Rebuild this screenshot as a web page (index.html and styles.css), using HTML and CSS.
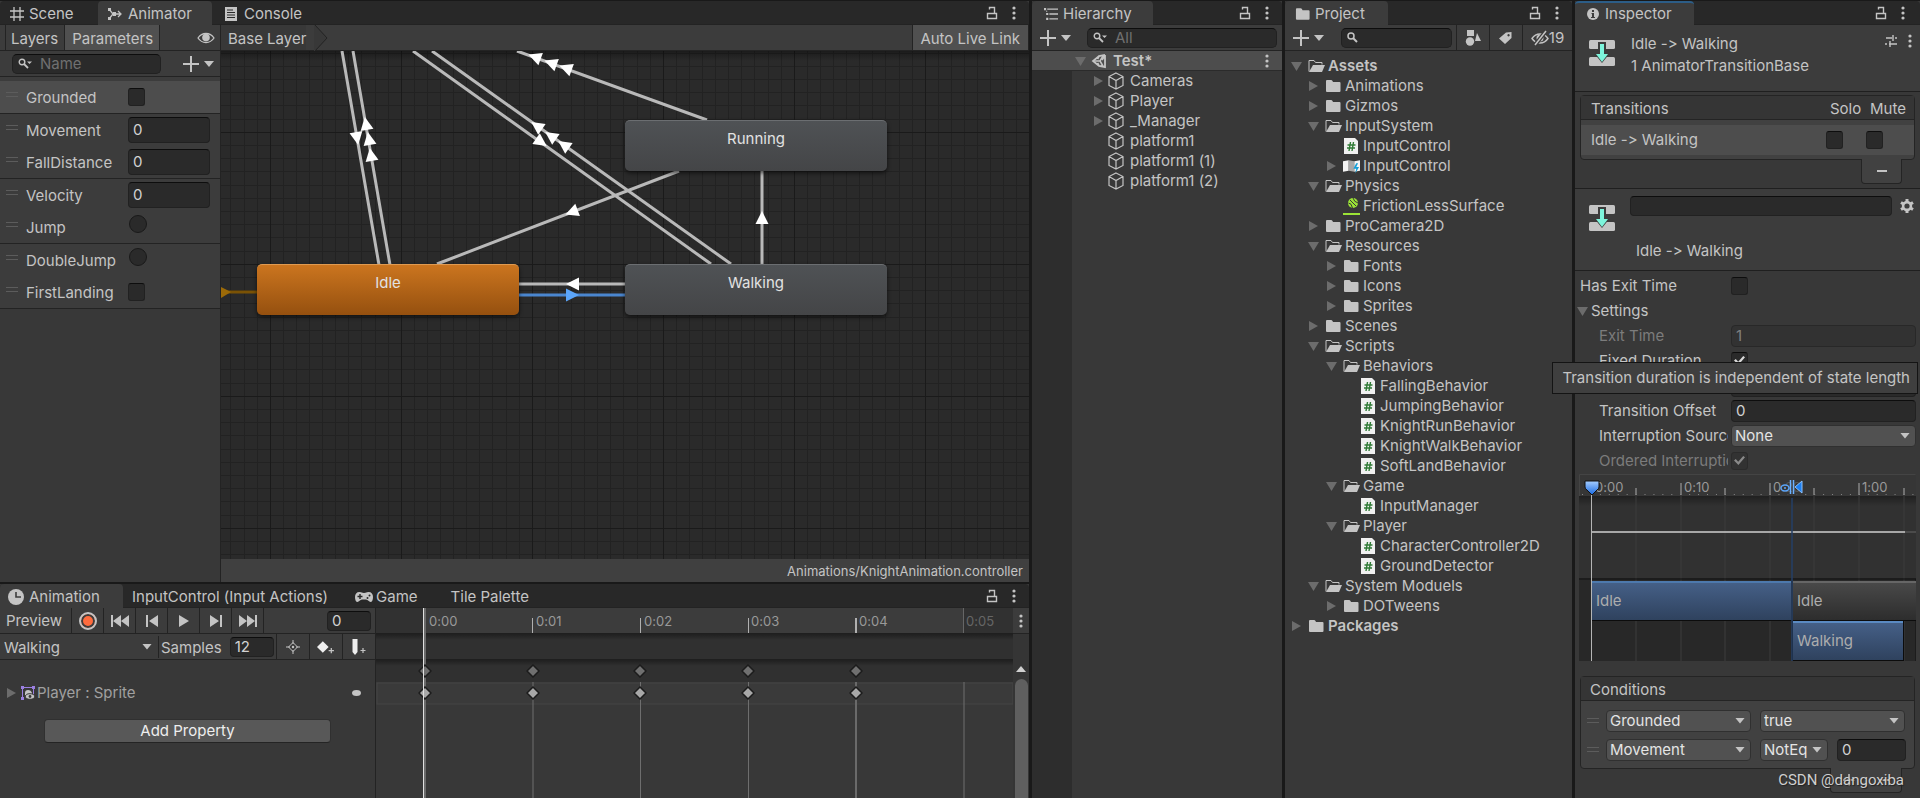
FILE: index.html
```html
<!DOCTYPE html>
<html lang="en">
  <head>
    <meta charset="UTF-8" />
    <meta name="viewport" content="width=device-width, initial-scale=1.0" />
    <title>Animator</title>
    <link rel="stylesheet" href="styles.css">
  </head>
  <body>
    <svg class="sprite" aria-hidden="true">
      <symbol id="lock" viewBox="0 0 12 14">
        <path d="M1.500 7.500h9v5h-9zM3.500 3.500V1.500h5v6" fill="none" stroke="currentColor" stroke-width="1.400" />
      </symbol>
      <symbol id="dots" viewBox="0 0 4 14">
        <circle cx="2" cy="2" r="1.600" /><circle cx="2" cy="7" r="1.600" /><circle cx="2" cy="12" r="1.600" />
      </symbol>
      <symbol id="plus" viewBox="0 0 16 16">
        <path d="M7 0h2v7h7v2H9v7H7V9H0V7h7z" />
      </symbol>
      <symbol id="down" viewBox="0 0 10 6"><path d="M0 0h10L5 6z" /></symbol>
      <symbol id="open" viewBox="0 0 12 12"><path d="M1 2h11L6.500 11z" /></symbol>
      <symbol id="closed" viewBox="0 0 12 12"><path d="M2 1v10l9-5z" /></symbol>
      <symbol id="search" viewBox="0 0 12 12">
        <circle cx="4" cy="4" r="3" fill="none" stroke="currentColor" stroke-width="1.500" />
        <path d="M6 6l4 4" stroke="currentColor" stroke-width="2" />
      </symbol>
      <symbol id="search-menu" viewBox="0 0 14 12">
        <circle cx="4" cy="4" r="2.800" fill="none" stroke="currentColor" stroke-width="1.400" />
        <path d="M6 6l4 4" stroke="currentColor" stroke-width="1.800" />
        <path d="M9 3.500h5L11.500 6z" />
      </symbol>
      <symbol id="grid" viewBox="0 0 14 14">
        <path d="M4 0v14M10 0v14M0 4h14M0 10h14" stroke="currentColor" stroke-width="1.300" />
      </symbol>
      <symbol id="animator" viewBox="0 0 14 12">
        <path d="M1 1l4 5-4 5M4 6h9M10 3l3 3-3 3" fill="none" stroke="currentColor" stroke-width="1.300" />
        <path d="M0 0h3v3H0zM0 9h3v3H0zM5 4h3v4H5z" />
      </symbol>
      <symbol id="console" viewBox="0 0 12 14">
        <path d="M0 0h12v14H0z" />
        <path d="M2 3h6M2 5.500h8M2 8h8M2 10.500h8" stroke="#282828" stroke-width="1.200" />
      </symbol>
      <symbol id="clock" viewBox="0 0 16 16">
        <circle cx="8" cy="8" r="8" />
        <path d="M8 3v5h5" fill="none" stroke="#3c3c3c" stroke-width="1.600" />
      </symbol>
      <symbol id="gamepad" viewBox="0 0 18 10">
        <path d="M4.500 0C7 0 6.500 1 9 1s2-1 4.500-1C16.500 0 18 2 18 5s-1 5-2.500 5S13 7.500 11 7.500H7C5 7.500 4 10 2.500 10S0 8 0 5s1.500-5 4.500-5z" />
        <path d="M2.500 4.500h5M5 2v5" stroke="#282828" stroke-width="1.400" />
        <circle cx="12.500" cy="6" r="1" fill="#282828" /><circle cx="14.500" cy="3.500" r="1" fill="#282828" />
      </symbol>
      <symbol id="eye" viewBox="0 0 18 12">
        <path d="M1 6c4-6 12-6 16 0-4 6-12 6-16 0z" fill="none" stroke="currentColor" stroke-width="1.300" />
        <circle cx="9" cy="5.500" r="3.800" />
      </symbol>
      <symbol id="hidden" viewBox="0 0 18 14">
        <path d="M1 7.500c4-6 12-6 16 0-4 6-12 6-16 0z" fill="none" stroke="currentColor" stroke-width="1.400" />
        <circle cx="9" cy="7" r="3.500" />
        <path d="M15 0L4 14" stroke="#3c3c3c" stroke-width="4" />
        <path d="M15 0L4 14" stroke="currentColor" stroke-width="1.500" />
      </symbol>
      <symbol id="hierarchy" viewBox="0 0 13 12">
        <path d="M3 1.500h10M5 6h8M5 10.500h8" stroke="currentColor" stroke-width="1.200" />
        <path d="M0 .5h2v2H0zM2 5h2v2H2zM2 9.500h2v2H2zM2 3h1v1H2z" />
      </symbol>
      <symbol id="info" viewBox="0 0 12 12">
        <circle cx="6" cy="6" r="6" />
        <path d="M5 2h2v2H5zM4.500 5H7v4h1v1H4V9h1V6h-.5z" fill="#3c3c3c" />
      </symbol>
      <symbol id="folder" viewBox="0 0 17 14">
        <path d="M1 2q0-1 1-1h4q1 0 1.500 1l.5 1h6.500q1 0 1 1v8q0 1-1 1H2q-1 0-1-1z" />
      </symbol>
      <symbol id="folder-open" viewBox="0 0 17 14">
        <path d="M1 12.500V1.500h5l1.500 2H14v2" fill="none" stroke="currentColor" />
        <path d="M5 6h12l-3 7H1z" />
      </symbol>
      <symbol id="cube" viewBox="0 0 18 18">
        <path d="M9 1l7 3.500v9L9 17l-7-3.500v-9zM2 4.500l7 4 7-4M9 8.500V17" fill="none" stroke="currentColor" stroke-width="1.200" />
      </symbol>
      <symbol id="unity" viewBox="0 0 16 16">
        <path d="M14 2v12L9.500 12.500M14 2L8 3 2 8l6 5 6 1M8 3l-1.500 3M8 13l-1.500-3M14 2l-3 5" fill="none" stroke="currentColor" stroke-width="1.800" />
        <path d="M2 8h7l3-5M9 8l3 5" fill="none" stroke="currentColor" stroke-width="1.500" />
      </symbol>
      <symbol id="script" viewBox="0 0 17 18">
        <path d="M1 1h11l3 3v13H1z" fill="#f0f0f0" />
        <path d="M7.500 5l-1.500 9M10.500 5L9 14M4.500 8h8M4 11h8" stroke="#2f7a35" stroke-width="1.400" />
      </symbol>
      <symbol id="actions" viewBox="0 0 18 16">
        <path d="M0 3l6-1v11l-6 1z" fill="#f4f4f4" />
        <path d="M6 2l6 1v11l-6-1z" fill="#a8a8a8" />
        <path d="M12 3l6-1v11l-6 1z" fill="#f4f4f4" />
        <path d="M14 5l-3 6h3l-1 5 4-7h-3l2-4z" fill="#159fd8" />
      </symbol>
      <symbol id="friction" viewBox="0 0 17 18">
        <circle cx="10" cy="6" r="5" fill="#9be336" />
        <path d="M5.500 6q3 0 4 5M10 1q1 4 5 5M7 3l6 6" fill="none" stroke="#383838" />
        <path d="M0 16h17v2H0z" fill="#9be336" />
      </symbol>
      <symbol id="shapes" viewBox="0 0 16 16">
        <path d="M2 0h7v6H2zM12 3l4 8h-6z" /><circle cx="5" cy="11.500" r="4.200" />
      </symbol>
      <symbol id="tag" viewBox="0 0 14 14">
        <path d="M7 1.500L12.500 1v6L6 13 0 7.500zM9.500 3a1.200 1.200 0 1 0 .1 0z" fill-rule="evenodd" />
      </symbol>
      <symbol id="first" viewBox="0 0 18 12"><path d="M0 0h2v12H0zM10 0v12L2 6zM18 0v12l-8-6z" /></symbol>
      <symbol id="prev" viewBox="0 0 12 12"><path d="M0 0h2v12H0zM12 0v12L3 6z" /></symbol>
      <symbol id="play" viewBox="0 0 10 12"><path d="M0 0v12l10-6z" /></symbol>
      <symbol id="target" viewBox="0 0 14 14">
        <path d="M7 2.500L11.500 7 7 11.500 2.500 7zM7 0v4M7 10v4M0 7h4M10 7h4" fill="none" stroke="currentColor" />
        <circle cx="7" cy="7" r="1.200" />
      </symbol>
      <symbol id="add-key" viewBox="0 0 17 14">
        <path d="M5.500 1.500L11 7l-5.500 5.500L0 7z" fill="#eee" />
        <path d="M13.500 8v5M11 10.500h5" stroke="currentColor" stroke-width="1.200" />
      </symbol>
      <symbol id="add-event" viewBox="0 0 15 16">
        <path d="M1 0h5v13l-2.500 3L1 13z" fill="#eee" />
        <path d="M11.500 9v5M9 11.500h5" stroke="currentColor" stroke-width="1.200" />
      </symbol>
      <symbol id="sprite-curve" viewBox="0 0 14 14">
        <path d="M1.500 13V1.500h11V12" fill="none" stroke="#9a7fe0" />
        <path d="M0 0h3v3H0zM11 0h3v3h-3zM0 11h3v3H0z" fill="#9a7fe0" />
        <path d="M4 12V7q0-3 3-3t4 3v2H4z" />
        <ellipse cx="9" cy="10.500" rx="4.500" ry="2.800" stroke="#383838" /><circle cx="9" cy="10.500" r="1.400" fill="#383838" />
      </symbol>
      <symbol id="transition" viewBox="0 0 26 28">
        <rect y="1" width="26" height="9" rx="1.500" />
        <rect y="18" width="26" height="9" rx="1.500" />
        <path d="M9 3h8v11h4l-8 10-8-10h4z" fill="#3c3c3c" />
        <path d="M11 5h4v10h4l-6 8-6-8h4z" fill="#7df5dc" />
      </symbol>
      <symbol id="preset" viewBox="0 0 12 12">
        <path d="M1 3h6M10 3h2M8 0v6M0 9h2M4 9h8M5 6v6" stroke="currentColor" stroke-width="1.400" />
      </symbol>
      <symbol id="gear" viewBox="0 0 14 14">
        <circle cx="7" cy="7" r="3.900" fill="none" stroke="currentColor" stroke-width="2.600" />
        <path d="M7 0v3M7 11v3M1 3.500l2.500 1.500M10.500 9L13 10.500M1 10.500L3.500 9M10.500 5L13 3.500" stroke="currentColor" stroke-width="3" />
      </symbol>
      <symbol id="diamond" viewBox="-7 -7 14 14"><path d="M0-6L6 0 0 6-6 0z" stroke="#1c1c1c" stroke-width="1.500" /></symbol>
    </svg>

    <main class="editor">
      <div class="left">
        <section class="window animator">
          <header class="tabs">
            <button class="tab tab-scene"><svg class="icon i14"><use href="#grid" /></svg>Scene</button>
            <button class="tab tab-animator active"><svg class="icon i14"><use href="#animator" /></svg>Animator</button>
            <button class="tab tab-console"><svg class="icon i14"><use href="#console" /></svg>Console</button>
            <div class="tab-tools">
              <button aria-label="Lock"><svg class="icon i14"><use href="#lock" /></svg></button>
              <button aria-label="Menu"><svg class="icon i14"><use href="#dots" /></svg></button>
            </div>
          </header>
          <div class="animator-body">
            <aside class="params">
              <div class="toolbar param-tabs">
                <button>Layers</button>
                <button class="on">Parameters</button>
                <button class="watch" aria-label="Show parameters"><svg class="icon i18"><use href="#eye" /></svg></button>
              </div>
              <div class="param-search">
                <label class="search"><svg class="icon i14"><use href="#search-menu" /></svg><input type="text" placeholder="Name" aria-label="Filter parameters" /></label>
                <button class="add" aria-label="Add parameter"><svg class="icon i16"><use href="#plus" /></svg><svg class="icon i10"><use href="#down" /></svg></button>
              </div>
              <ul class="param-list">
                <li class="selected"><i class="handle"></i><label for="p1">Grounded</label><input id="p1" type="checkbox" /></li>
                <li><i class="handle"></i><label for="p2">Movement</label><input id="p2" class="field" type="text" value="0" /></li>
                <li><i class="handle"></i><label for="p3">FallDistance</label><input id="p3" class="field" type="text" value="0" /></li>
                <li><i class="handle"></i><label for="p4">Velocity</label><input id="p4" class="field" type="text" value="0" /></li>
                <li><i class="handle"></i><label for="p5">Jump</label><input id="p5" type="radio" /></li>
                <li><i class="handle"></i><label for="p6">DoubleJump</label><input id="p6" type="radio" /></li>
                <li><i class="handle"></i><label for="p7">FirstLanding</label><input id="p7" type="checkbox" /></li>
              </ul>
            </aside>
            <div class="graph-pane">
              <div class="toolbar crumbs">
                <button class="crumb">Base Layer</button>
                <svg class="crumb-end" viewBox="0 0 14 26"><path d="M0 0h1l12 13L1 26H0z" fill="#383838" /><path d="M1 0l12 13L1 26" fill="none" stroke="#232323" /></svg>
                <button class="live on">Auto Live Link</button>
              </div>
              <div class="graph">
                <svg class="edges">
                  <defs>
                    <pattern id="cells" x="49" y="81" width="131" height="132" patternUnits="userSpaceOnUse">
                      <path d="M13.500 0v132M26.500 0v132M39.500 0v132M52.500 0v132M65.500 0v132M78.500 0v132M91.500 0v132M105.500 0v132M118.500 0v132M0 13.500h131M0 26.500h131M0 39.500h131M0 53.500h131M0 66.500h131M0 79.500h131M0 92.500h131M0 105.500h131M0 119.500h131" stroke="#222" />
                      <path d="M.5 0v132M0 .5h131" stroke="#1a1a1a" />
                    </pattern>
                    <linearGradient id="shade" x2="0" y2="1"><stop stop-opacity=".35" /><stop offset="1" stop-opacity="0" /></linearGradient>
                    <path id="arrow" d="M7 0L-6-6.500v13z" />
                  </defs>
                  <rect width="100%" height="100%" fill="url(#cells)" />
                  <rect width="100%" height="10" fill="url(#shade)" />
                  <g stroke="#b9b9b9" stroke-width="3">
                    <path d="M121 0l37 214M132 0l37 214M192 0l298 213M211 0l299 213M296 0l190 69M458 120L216 213M541 120v93M298 233h107" />
                    <path d="M298 244h107" stroke="#4a86cf" />
                    <path d="M0 241h36" stroke="#7a5205" />
                  </g>
                  <g fill="#fff">
                    <use href="#arrow" transform="translate(145 73) rotate(-100)" />
                    <use href="#arrow" transform="translate(148 88) rotate(-100)" />
                    <use href="#arrow" transform="translate(150 104) rotate(-100)" />
                    <use href="#arrow" transform="translate(136 87) rotate(80)" />
                    <use href="#arrow" transform="translate(316 75) rotate(215)" />
                    <use href="#arrow" transform="translate(330 85) rotate(215)" />
                    <use href="#arrow" transform="translate(343 94) rotate(215)" />
                    <use href="#arrow" transform="translate(320 91) rotate(35)" />
                    <use href="#arrow" transform="translate(314 6) rotate(200)" />
                    <use href="#arrow" transform="translate(330 12) rotate(200)" />
                    <use href="#arrow" transform="translate(345 17) rotate(200)" />
                    <use href="#arrow" transform="translate(351 161) rotate(159)" />
                    <use href="#arrow" transform="translate(541 167) rotate(-90)" />
                    <use href="#arrow" transform="translate(352 233) rotate(180)" />
                    <use href="#arrow" transform="translate(351 244)" fill="#5ba5fa" />
                    <path d="M0 236l10 5-10 6z" fill="#9c6a08" />
                  </g>
                </svg>
                <button class="node running">Running</button>
                <button class="node idle">Idle</button>
                <button class="node walking">Walking</button>
              </div>
              <footer class="asset-path">Animations/KnightAnimation.controller</footer>
            </div>
          </div>
        </section>

        <section class="window animation">
          <header class="tabs">
            <button class="tab tab-animation active"><svg class="icon i16"><use href="#clock" /></svg>Animation</button>
            <button class="tab tab-input">InputControl (Input Actions)</button>
            <button class="tab tab-game"><svg class="icon i18"><use href="#gamepad" /></svg>Game</button>
            <button class="tab tab-palette">Tile Palette</button>
            <div class="tab-tools">
              <button aria-label="Lock"><svg class="icon i14"><use href="#lock" /></svg></button>
              <button aria-label="Menu"><svg class="icon i14"><use href="#dots" /></svg></button>
            </div>
          </header>
          <div class="animation-body">
            <div class="clip">
              <div class="toolbar playback">
                <button class="preview">Preview</button>
                <button aria-label="Record"><i class="record"></i></button>
                <button aria-label="First frame"><svg class="icon i18"><use href="#first" /></svg></button>
                <button aria-label="Previous key"><svg class="icon i12"><use href="#prev" /></svg></button>
                <button aria-label="Play"><svg class="icon i12"><use href="#play" /></svg></button>
                <button aria-label="Next key"><svg class="icon i12 flip"><use href="#prev" /></svg></button>
                <button aria-label="Last frame"><svg class="icon i18 flip"><use href="#first" /></svg></button>
                <input class="field frame" type="text" value="0" aria-label="Frame" />
              </div>
              <div class="toolbar sampling">
                <span class="dropdown clip-name"><select aria-label="Clip"><option>Walking</option></select></span>
                <label class="samples" for="samples">Samples</label>
                <input id="samples" class="field" type="text" value="12" />
                <button aria-label="Filter by selection"><svg class="icon i14"><use href="#target" /></svg></button>
                <button aria-label="Add keyframe"><svg class="icon i18"><use href="#add-key" /></svg></button>
                <button aria-label="Add event"><svg class="icon i16"><use href="#add-event" /></svg></button>
              </div>
              <div class="curves">
                <div class="curve">
                  <svg class="icon i12 fold"><use href="#closed" /></svg>
                  <svg class="icon i14"><use href="#sprite-curve" /></svg>
                  <span>Player : Sprite</span>
                  <i class="pill"></i>
                </div>
                <button class="add-property">Add Property</button>
              </div>
            </div>
            <svg class="dopesheet">
              <rect width="100%" height="25" fill="#313131" />
              <rect x="49" width="539" height="25" fill="#3c3c3c" />
              <rect y="25" width="100%" height="49" fill="#303030" />
              <path d="M0 25.500h638M0 51.500h638" stroke="#1f1f1f" />
              <rect y="26" width="100%" height="6" fill="url(#shade)" />
              <rect y="52" width="100%" height="6" fill="url(#shade)" />
              <rect x="1" y="75" width="636" height="21" fill="#3a3a3a" stroke="#454545" />
              <path d="M157 74v130M264.500 74v130M372.500 74v130M588 74v130" stroke="#6e6e6e" />
              <path d="M480 74v130M49 0v204" stroke="#6a6a6a" stroke-width="2" />
              <path d="M156.500 10v15M264.500 10v15M372.500 10v15" stroke="#b0b0b0" />
              <path d="M480 10v15" stroke="#b0b0b0" stroke-width="2" />
              <path d="M587.500 0v25" stroke="#666" />
              <g class="ruler-text">
                <text x="53" y="18">0:00</text>
                <text x="160" y="18">0:01</text>
                <text x="268" y="18">0:02</text>
                <text x="375" y="18">0:03</text>
                <text x="483" y="18">0:04</text>
                <text class="dim" x="590" y="18">0:05</text>
              </g>
              <g fill="#707070">
                <use href="#diamond" x="42" y="56" width="14" height="14" />
                <use href="#diamond" x="150" y="56" width="14" height="14" />
                <use href="#diamond" x="257" y="56" width="14" height="14" />
                <use href="#diamond" x="365" y="56" width="14" height="14" />
                <use href="#diamond" x="473" y="56" width="14" height="14" />
              </g>
              <g fill="#a8a8a8">
                <use href="#diamond" x="42" y="78" width="14" height="14" />
                <use href="#diamond" x="150" y="78" width="14" height="14" />
                <use href="#diamond" x="257" y="78" width="14" height="14" />
                <use href="#diamond" x="365" y="78" width="14" height="14" />
                <use href="#diamond" x="473" y="78" width="14" height="14" />
              </g>
              <path d="M47.500 0v204" stroke="#e0e0e0" />
            </svg>
            <div class="scrollbar">
              <button aria-label="Options"><svg class="icon i14"><use href="#dots" /></svg></button>
              <i class="up"></i>
              <i class="thumb"></i>
            </div>
          </div>
        </section>
      </div>

      <section class="window hierarchy">
        <header class="tabs">
          <button class="tab tab-hierarchy active"><svg class="icon i14"><use href="#hierarchy" /></svg>Hierarchy</button>
          <div class="tab-tools">
            <button aria-label="Lock"><svg class="icon i14"><use href="#lock" /></svg></button>
            <button aria-label="Menu"><svg class="icon i14"><use href="#dots" /></svg></button>
          </div>
        </header>
        <div class="toolbar find">
          <button class="add" aria-label="Create"><svg class="icon i16"><use href="#plus" /></svg><svg class="icon i10"><use href="#down" /></svg></button>
          <label class="search"><svg class="icon i14"><use href="#search-menu" /></svg><input type="text" placeholder="All" aria-label="Search hierarchy" /></label>
        </div>
        <div class="scene-row">
          <svg class="icon i12 fold"><use href="#open" /></svg>
          <svg class="icon i16"><use href="#unity" /></svg>
          <b>Test*</b>
          <button aria-label="Scene menu"><svg class="icon i14"><use href="#dots" /></svg></button>
        </div>
        <ul class="tree objects">
          <li><svg class="icon i12 fold"><use href="#closed" /></svg><svg class="icon i18"><use href="#cube" /></svg>Cameras</li>
          <li><svg class="icon i12 fold"><use href="#closed" /></svg><svg class="icon i18"><use href="#cube" /></svg>Player</li>
          <li><svg class="icon i12 fold"><use href="#closed" /></svg><svg class="icon i18"><use href="#cube" /></svg>_Manager</li>
          <li class="leaf"><svg class="icon i18"><use href="#cube" /></svg>platform1</li>
          <li class="leaf"><svg class="icon i18"><use href="#cube" /></svg>platform1 (1)</li>
          <li class="leaf"><svg class="icon i18"><use href="#cube" /></svg>platform1 (2)</li>
        </ul>
      </section>

      <section class="window project">
        <header class="tabs">
          <button class="tab tab-project active"><svg class="icon i16"><use href="#folder" /></svg>Project</button>
          <div class="tab-tools">
            <button aria-label="Lock"><svg class="icon i14"><use href="#lock" /></svg></button>
            <button aria-label="Menu"><svg class="icon i14"><use href="#dots" /></svg></button>
          </div>
        </header>
        <div class="toolbar find">
          <button class="add" aria-label="Create"><svg class="icon i16"><use href="#plus" /></svg><svg class="icon i10"><use href="#down" /></svg></button>
          <label class="search"><svg class="icon i12"><use href="#search" /></svg><input type="text" aria-label="Search project" /></label>
          <button class="filter" aria-label="Filter by type"><svg class="icon i16"><use href="#shapes" /></svg></button>
          <button class="filter" aria-label="Filter by label"><svg class="icon i14"><use href="#tag" /></svg></button>
          <button class="filter hidden-count"><svg class="icon i18"><use href="#hidden" /></svg>19</button>
        </div>
        <ul class="tree files">
          <li class="root"><svg class="icon i12 fold"><use href="#open" /></svg><svg class="icon i17"><use href="#folder-open" /></svg>Assets</li>
          <li class="l1"><svg class="icon i12 fold"><use href="#closed" /></svg><svg class="icon i17"><use href="#folder" /></svg>Animations</li>
          <li class="l1"><svg class="icon i12 fold"><use href="#closed" /></svg><svg class="icon i17"><use href="#folder" /></svg>Gizmos</li>
          <li class="l1"><svg class="icon i12 fold"><use href="#open" /></svg><svg class="icon i17"><use href="#folder-open" /></svg>InputSystem</li>
          <li class="l2 leaf"><svg class="icon i17"><use href="#script" /></svg>InputControl</li>
          <li class="l2"><svg class="icon i12 fold"><use href="#closed" /></svg><svg class="icon i17"><use href="#actions" /></svg>InputControl</li>
          <li class="l1"><svg class="icon i12 fold"><use href="#open" /></svg><svg class="icon i17"><use href="#folder-open" /></svg>Physics</li>
          <li class="l2 leaf"><svg class="icon i17"><use href="#friction" /></svg>FrictionLessSurface</li>
          <li class="l1"><svg class="icon i12 fold"><use href="#closed" /></svg><svg class="icon i17"><use href="#folder" /></svg>ProCamera2D</li>
          <li class="l1"><svg class="icon i12 fold"><use href="#open" /></svg><svg class="icon i17"><use href="#folder-open" /></svg>Resources</li>
          <li class="l2"><svg class="icon i12 fold"><use href="#closed" /></svg><svg class="icon i17"><use href="#folder" /></svg>Fonts</li>
          <li class="l2"><svg class="icon i12 fold"><use href="#closed" /></svg><svg class="icon i17"><use href="#folder" /></svg>Icons</li>
          <li class="l2"><svg class="icon i12 fold"><use href="#closed" /></svg><svg class="icon i17"><use href="#folder" /></svg>Sprites</li>
          <li class="l1"><svg class="icon i12 fold"><use href="#closed" /></svg><svg class="icon i17"><use href="#folder" /></svg>Scenes</li>
          <li class="l1"><svg class="icon i12 fold"><use href="#open" /></svg><svg class="icon i17"><use href="#folder-open" /></svg>Scripts</li>
          <li class="l2"><svg class="icon i12 fold"><use href="#open" /></svg><svg class="icon i17"><use href="#folder-open" /></svg>Behaviors</li>
          <li class="l3 leaf"><svg class="icon i17"><use href="#script" /></svg>FallingBehavior</li>
          <li class="l3 leaf"><svg class="icon i17"><use href="#script" /></svg>JumpingBehavior</li>
          <li class="l3 leaf"><svg class="icon i17"><use href="#script" /></svg>KnightRunBehavior</li>
          <li class="l3 leaf"><svg class="icon i17"><use href="#script" /></svg>KnightWalkBehavior</li>
          <li class="l3 leaf"><svg class="icon i17"><use href="#script" /></svg>SoftLandBehavior</li>
          <li class="l2"><svg class="icon i12 fold"><use href="#open" /></svg><svg class="icon i17"><use href="#folder-open" /></svg>Game</li>
          <li class="l3 leaf"><svg class="icon i17"><use href="#script" /></svg>InputManager</li>
          <li class="l2"><svg class="icon i12 fold"><use href="#open" /></svg><svg class="icon i17"><use href="#folder-open" /></svg>Player</li>
          <li class="l3 leaf"><svg class="icon i17"><use href="#script" /></svg>CharacterController2D</li>
          <li class="l3 leaf"><svg class="icon i17"><use href="#script" /></svg>GroundDetector</li>
          <li class="l1"><svg class="icon i12 fold"><use href="#open" /></svg><svg class="icon i17"><use href="#folder-open" /></svg>System Moduels</li>
          <li class="l2"><svg class="icon i12 fold"><use href="#closed" /></svg><svg class="icon i17"><use href="#folder" /></svg>DOTweens</li>
          <li class="root"><svg class="icon i12 fold"><use href="#closed" /></svg><svg class="icon i17"><use href="#folder" /></svg>Packages</li>
        </ul>
      </section>

      <section class="window inspector">
        <header class="tabs">
          <button class="tab tab-inspector active focused"><svg class="icon i12"><use href="#info" /></svg>Inspector</button>
          <div class="tab-tools">
            <button aria-label="Lock"><svg class="icon i14"><use href="#lock" /></svg></button>
            <button aria-label="Menu"><svg class="icon i14"><use href="#dots" /></svg></button>
          </div>
        </header>

        <div class="asset-head">
          <svg class="icon i28"><use href="#transition" /></svg>
          <div class="asset-title">Idle -&gt; Walking<br />1 AnimatorTransitionBase</div>
          <div class="asset-tools">
            <button aria-label="Presets"><svg class="icon i12"><use href="#preset" /></svg></button>
            <button aria-label="Menu"><svg class="icon i14"><use href="#dots" /></svg></button>
          </div>
        </div>

        <div class="transitions">
          <table class="box">
            <thead>
              <tr><th class="name">Transitions</th><th>Solo</th><th class="mute">Mute</th></tr>
            </thead>
            <tbody>
              <tr>
                <td class="name">Idle -&gt; Walking</td>
                <td><input type="checkbox" aria-label="Solo" /></td>
                <td><input type="checkbox" aria-label="Mute" /></td>
              </tr>
            </tbody>
          </table>
          <div class="box-foot"><button aria-label="Remove transition"><i class="minus"></i></button></div>
        </div>

        <div class="transition-head">
          <svg class="icon i28"><use href="#transition" /></svg>
          <input class="field" type="text" aria-label="Transition name" />
          <button aria-label="Settings"><svg class="icon i14"><use href="#gear" /></svg></button>
          <span class="transition-name">Idle -&gt; Walking</span>
        </div>

        <div class="settings">
          <div class="row"><label for="s1">Has Exit Time</label><input id="s1" type="checkbox" /></div>
          <div class="row group"><svg class="icon i12 fold"><use href="#open" /></svg>Settings</div>
          <div class="row sub off"><label for="s2">Exit Time</label><input id="s2" class="field" type="text" value="1" disabled /></div>
          <div class="row sub"><label for="s3">Fixed Duration</label><input id="s3" type="checkbox" checked /></div>
          <div class="row sub"><input class="field" type="text" aria-label="Transition Duration" /></div>
          <div class="row sub"><label for="s5">Transition Offset</label><input id="s5" class="field" type="text" value="0" /></div>
          <div class="row sub"><label for="s6">Interruption Source</label><span class="dropdown raised"><select id="s6"><option>None</option></select></span></div>
          <div class="row sub off"><label for="s7">Ordered Interruption</label><input id="s7" type="checkbox" checked disabled /></div>
        </div>

        <svg class="blend" viewBox="0 0 337 187">
          <defs>
            <linearGradient id="blue" x2="0" y2="1"><stop stop-color="#466189" /><stop offset="1" stop-color="#2f425e" /></linearGradient>
            <linearGradient id="gray" x2="0" y2="1"><stop stop-color="#4a4a4a" /><stop offset="1" stop-color="#2d2d2d" /></linearGradient>
            <linearGradient id="pin" x2="0" y2="1"><stop stop-color="#a5cdff" /><stop offset="1" stop-color="#1667e0" /></linearGradient>
          </defs>
          <rect width="337" height="22" fill="#363636" />
          <rect y="22" width="337" height="83" fill="#313131" />
          <rect y="22" width="337" height="10" fill="url(#shade)" />
          <rect y="104" width="337" height="83" fill="#282828" />
          <path d="M.5 22V.5h336" fill="none" stroke="#444" />
          <path d="M57 22v165M102 22v165M146 22v165M191 22v165M235 22v165M280 22v165M325 22v165" stroke="#3c3c3c" />
          <path d="M102 9v12M191 9v12M280 9v12M57 14v7M146 14v7M235 14v7M325 14v7" stroke="#aaa" />
          <path d="M3 20.500h334" stroke="#888" stroke-dasharray="1 7.930" />
          <g class="ruler-text">
            <text x="16" y="18">0:00</text>
            <text x="105" y="18">0:10</text>
            <text x="194" y="18">0:20</text>
            <text x="283" y="18">1:00</text>
          </g>
          <path d="M12 58h314" stroke="#cfcfcf" stroke-width="1.500" /><path d="M326 58h11" stroke="#555" stroke-width="1.500" />
          <path d="M0 105h337v82" fill="none" stroke="#111" />
          <rect x="13" y="107" width="199" height="39" fill="url(#blue)" /><path d="M13 108h199" stroke="#4d79ad" stroke-width="2" />
          <rect x="214" y="107" width="123" height="39" fill="url(#gray)" /><path d="M214 108h123" stroke="#666" stroke-width="2" />
          <rect x="213" y="146" width="112" height="41" fill="#0c0c0c" />
          <rect x="214" y="147" width="110" height="39" fill="url(#blue)" /><path d="M214 148h110" stroke="#5a8ac2" stroke-width="2" />
          <path d="M12 146.500h325" stroke="#0c0c0c" />
          <path d="M213 24v163" stroke="#253f66" stroke-width="1.500" />
          <path d="M12.500 20v167" stroke="#b5b5b5" />
          <path d="M6 7h14v6q0 2-2 3l-5 5-5-5q-2-1-2-3z" fill="url(#pin)" stroke="#111" />
          <rect x="202" y="6" width="22" height="15" fill="#363636" opacity=".7" />
          <path d="M211.500 6v14M214.500 6v14" stroke="#6cb1ff" stroke-width="1.500" />
          <path d="M223 7v12l-7-6z" fill="#1d7ff0" stroke="#8cc2ff" />
          <ellipse cx="206" cy="14" rx="4" ry="3" fill="none" stroke="#5ba5fa" stroke-width="1.500" /><circle cx="206" cy="14" r="1" fill="#5ba5fa" />
          <g class="clip-text">
            <text x="17" y="132">Idle</text>
            <text x="218" y="132">Idle</text>
            <text x="218" y="172">Walking</text>
          </g>
        </svg>

        <div class="conditions">
          <div class="box">
            <div class="box-head">Conditions</div>
            <div class="condition">
              <i class="handle"></i>
              <span class="dropdown raised"><select aria-label="Parameter"><option>Grounded</option></select></span>
              <span class="dropdown raised"><select aria-label="Value"><option>true</option></select></span>
            </div>
            <div class="condition">
              <i class="handle"></i>
              <span class="dropdown raised"><select aria-label="Parameter"><option>Movement</option></select></span>
              <span class="dropdown raised tight"><select aria-label="Comparison"><option>NotEq</option></select></span>
              <input class="field" type="text" value="0" aria-label="Value" />
            </div>
          </div>
          <div class="box-foot pair">
            <button aria-label="Add condition"><svg class="icon i12"><use href="#plus" /></svg></button>
            <button aria-label="Remove condition"><i class="minus"></i></button>
          </div>
        </div>

        <div class="tooltip" role="tooltip">Transition duration is independent of state length</div>
        <div class="watermark">CSDN @dangoxiba</div>
      </section>
    </main>
  </body>
</html>
```
FILE: styles.css
```css
* {
  box-sizing: border-box;
}

body {
  margin: 0;
  background: #191919;
  color: #c4c4c4;
  font: 15px/20px Inter, "Liberation Sans", sans-serif;
  font-variant-ligatures: no-contextual;
}

button,
input,
select {
  margin: 0;
  padding: 0;
  border: 0;
  background: none;
  color: inherit;
  font: inherit;
}

ul {
  list-style: none;
  margin: 0;
  padding: 0;
}

.sprite {
  display: none;
}

.icon {
  display: block;
  flex: none;
  height: 14px;
  fill: currentColor;
}

.i10 { width: 10px; height: 10px; }
.i12 { width: 12px; height: 12px; }
.i14 { width: 14px; }
.i16 { width: 16px; height: 16px; }
.i17 { width: 17px; height: 18px; }
.i18 { width: 18px; height: 18px; }
.i28 { width: 26px; height: 28px; }

.flip {
  transform: scaleX(-1);
}

.fold {
  color: #6c6c6c;
}

/* windows */

.editor {
  display: grid;
  grid-template-columns: minmax(0, 1fr) 250px 287px 345px;
  column-gap: 3px;
  min-height: 100vh;
  padding-top: 1px;
}

.left {
  display: grid;
  grid-template-rows: 1fr 214px;
  row-gap: 2px;
}

.window {
  display: flex;
  flex-direction: column;
  min-width: 0;
  background: #383838;
}

.tabs {
  display: flex;
  flex: none;
  height: 24px;
  background: #282828;
  border-bottom: 1px solid #232323;
  border-radius: 4px 4px 0 0;
}

.tab {
  display: flex;
  align-items: center;
  gap: 5px;
  padding: 2px 10px 0;
  white-space: nowrap;
}

.tab.active {
  height: 24px;
  background: #3c3c3c;
  border-radius: 4px 4px 0 0;
}

.tab.focused {
  border-top: 2px solid #2c5d87;
  padding-top: 0;
}

.tab-scene { width: 98px; }
.tab-animator { width: 114px; gap: 6px; }
.tab-console { gap: 6px; padding-left: 12px; }
.tab-animation { width: 123px; padding-left: 8px; }
.tab-input { padding-left: 9px; padding-right: 17px; }
.tab-game { gap: 3px; padding-right: 23px; }
.tab-hierarchy { width: 121px; padding-left: 12px; }
.tab-project { width: 103px; gap: 4px; }
.tab-inspector { width: 119px; gap: 6px; padding-left: 12px; }

.tab-tools {
  display: flex;
  align-items: center;
  gap: 8px;
  margin-left: auto;
  padding-right: 8px;
}

.inspector .tab-tools {
  padding-right: 10px;
}

.toolbar {
  display: flex;
  flex: none;
  align-items: center;
  height: 26px;
  background: #3c3c3c;
  border-bottom: 1px solid #232323;
}

.toolbar > button {
  align-self: stretch;
}

.on {
  background: #505050;
}

.field {
  height: 22px;
  padding: 0 4px;
  min-width: 0;
  background: #2a2a2a;
  border: 1px solid #212121;
  border-top-color: #0d0d0d;
  border-radius: 4px;
  color: #d2d2d2;
}

.search {
  display: flex;
  align-items: center;
  gap: 8px;
  height: 20px;
  padding-left: 5px;
  background: #2a2a2a;
  border: 1px solid #212121;
  border-top-color: #0d0d0d;
  border-radius: 5px;
}

.search input {
  flex: 1;
  min-width: 0;
}

.search input::placeholder {
  color: #707070;
}

.add {
  display: flex;
  align-items: center;
  gap: 5px;
}

.add .i10 {
  height: 6px;
}

input[type="checkbox"],
input[type="radio"] {
  appearance: none;
  flex: none;
  display: block;
  width: 17px;
  height: 18px;
  background: #2a2a2a;
  border: 1px solid #212121;
  border-top-color: #0d0d0d;
  border-radius: 3px;
}

input[type="radio"] {
  width: 18px;
  border-color: #191919;
  border-radius: 50%;
}

input[type="checkbox"]:checked::before {
  content: "";
  display: block;
  width: 11px;
  height: 10px;
  margin: 3px 2px;
  background: #d8d8d8;
  clip-path: polygon(0 50%, 16% 36%, 38% 62%, 84% 4%, 100% 18%, 40% 96%);
}

input[type="checkbox"]:disabled {
  background: #323232;
  border-color: #2b2b2b;
}

input[type="checkbox"]:disabled::before {
  background: #8a8a8a;
}

.dropdown {
  display: grid;
  align-items: center;
  min-width: 0;
}

.dropdown select {
  grid-area: 1 / 1;
  appearance: none;
  width: 100%;
  height: 22px;
  padding-left: 4px;
}

.dropdown::after {
  content: "";
  grid-area: 1 / 1;
  justify-self: end;
  width: 10px;
  height: 6px;
  margin-right: 6px;
  background: #c4c4c4;
  clip-path: polygon(0 0, 100% 0, 50% 100%);
  pointer-events: none;
}

.dropdown.raised select {
  padding-left: 3px;
  background: #515151;
  border: 1px solid #303030;
  border-radius: 4px;
  color: #e4e4e4;
}

.handle {
  flex: none;
  width: 12px;
  height: 5px;
  border: solid #5c5c5c;
  border-width: 1px 0;
}

/* animator */

.animator-body {
  display: grid;
  grid-template-columns: 221px minmax(0, 1fr);
  flex: 1;
}

.params {
  border-right: 1px solid #232323;
}

.param-tabs {
  padding-left: 5px;
}

.param-tabs button {
  padding: 2px 6px 0 5px;
  border-left: 1px solid #232323;
}

.param-tabs .on {
  padding: 2px 6px 0 7px;
  border-right: 1px solid #232323;
}

.param-tabs .watch {
  margin-left: auto;
  padding: 0 5px 0 0;
  border: 0;
}

.param-search {
  display: flex;
  align-items: center;
  justify-content: space-between;
  height: 26px;
  padding: 0 6px 0 12px;
  background: #3c3c3c;
  border-bottom: 1px solid #232323;
}

.param-search .search {
  width: 149px;
}

.param-list {
  padding-top: 4px;
  background: #3c3c3c;
}

.param-list li {
  display: flex;
  align-items: center;
  height: 32px;
  padding: 0 10px 0 6px;
}

.param-list li:nth-child(odd) {
  height: 33px;
  border-bottom: 1px solid #232323;
}

.param-list .selected {
  background: #4d4d4d;
}

.param-list label {
  flex: none;
  width: 110px;
  padding: 1px 0 0 8px;
}

.param-list .handle {
  margin-bottom: 5px;
}

.param-list .field {
  width: 82px;
  height: 26px;
  padding-bottom: 2px;
}

.param-list input[type="radio"] {
  align-self: flex-start;
  margin: 4px 0 0 1px;
}

.graph-pane {
  display: flex;
  flex-direction: column;
}

.crumb {
  padding: 2px 0 0 7px;
  background: #383838;
}

.crumb-end {
  width: 22px;
  height: 26px;
}

.crumb + .crumb-end {
  margin-left: 4px;
}

.live {
  margin-left: auto;
  padding: 2px 8px 0 7px;
  border-left: 1px solid #232323;
  border-right: 1px solid #232323;
}

.graph {
  position: relative;
  flex: 1;
  overflow: hidden;
  background: #2a2a2a;
}

.edges {
  position: absolute;
  inset: 0;
  width: 100%;
  height: 100%;
}

.node {
  position: absolute;
  width: 262px;
  height: 51px;
  padding-bottom: 14px;
  border-top: 1px solid #6b6e71;
  border-radius: 5px;
  background: linear-gradient(#4f5255, #444547);
  box-shadow: 0 2px 4px rgba(0, 0, 0, 0.6);
  color: #e2e2e2;
}

.running { left: 404px; top: 69px; }
.walking { left: 404px; top: 213px; }

.idle {
  left: 36px;
  top: 213px;
  border-top-color: #e09a50;
  background: linear-gradient(#cb751f, #95500f);
}

.asset-path {
  height: 23px;
  padding: 2px 6px 0;
  background: #404040;
  font-size: 13px;
  text-align: right;
}

/* animation */

.animation-body {
  display: grid;
  grid-template-columns: 376px minmax(0, 1fr) 16px;
  flex: 1;
}

.clip {
  border-right: 1px solid #232323;
}

.playback button,
.sampling button {
  display: grid;
  place-items: center;
  width: 33px;
  border-right: 1px solid #232323;
}

.playback .preview {
  width: 72px;
  padding-right: 3px;
}

.playback button + button {
  width: 32px;
}

.playback .i18,
.playback .i12 {
  height: 12px;
}

.record {
  width: 18px;
  height: 18px;
  border: 2px solid #c4c4c4;
  border-radius: 50%;
  background: #ff6b3d;
  box-shadow: inset 0 0 0 2px #3c3c3c;
}

.playback .field {
  width: 44px;
  height: 20px;
  margin: 0 4px 0 auto;
}

.clip-name {
  width: 159px;
  border-right: 1px solid #232323;
}

.sampling select,
.samples {
  padding-top: 2px;
}

.samples {
  padding-left: 2px;
  padding-right: 8px;
}

.sampling .field {
  flex: 1;
  height: 20px;
  margin-right: 2px;
}

.sampling button {
  border: 0;
  border-left: 1px solid #232323;
}

.curves {
  display: flex;
  flex-direction: column;
  gap: 15px;
  padding-top: 22px;
  color: #a0a0a0;
}

.curve {
  display: flex;
  align-items: center;
  height: 22px;
  padding: 0 14px 0 5px;
}

.curve .i14 {
  margin: 0 2px 0 4px;
  color: #c4c4c4;
}

.pill {
  width: 9px;
  height: 6px;
  margin-left: auto;
  border-radius: 50%;
  background: #c4c4c4;
}

.add-property {
  height: 24px;
  margin: 0 44px;
  background: #585858;
  border: 1px solid #303030;
  border-bottom-color: #242424;
  border-radius: 4px;
  color: #eee;
}

.dopesheet {
  display: block;
  width: 100%;
  height: 100%;
}

.ruler-text {
  fill: #999;
  font-size: 13px;
}

.ruler-text .dim {
  fill: #666;
}

.clip-text {
  fill: #adadad;
}

.scrollbar {
  display: flex;
  flex-direction: column;
  align-items: center;
  background: #353535;
}

.scrollbar button {
  display: grid;
  place-items: center;
  width: 100%;
  height: 26px;
  background: #3c3c3c;
  border-bottom: 1px solid #232323;
}

.up {
  width: 10px;
  height: 6px;
  margin: 32px 0 7px;
  background: #d0d0d0;
  clip-path: polygon(50% 0, 100% 100%, 0 100%);
}

.thumb {
  flex: 1;
  width: 13px;
  background: #5f5f5f;
  border-radius: 7px 7px 0 0;
}

/* hierarchy and project */

.find .add {
  padding: 0 8px;
}

.find .search {
  flex: 1;
  min-width: 0;
}

.hierarchy .search {
  margin: 0 5px 0 8px;
}

.project .search {
  margin: 0 4px 0 9px;
}

.filter {
  display: flex;
  align-items: center;
  justify-content: center;
  width: 33px;
  border-left: 1px solid #232323;
}

.filter.hidden-count {
  width: 50px;
}

.scene-row {
  display: flex;
  align-items: center;
  height: 20px;
  padding: 0 8px 0 42px;
  background: #4d4d4d;
  border-bottom: 1px solid #2b2b2b;
}

.scene-row .i16 {
  margin: 0 6px 0 5px;
}

.scene-row b,
.root {
  font-weight: 600;
}

.scene-row button {
  margin-left: auto;
}

.tree li {
  display: flex;
  align-items: center;
  height: 20px;
  white-space: nowrap;
}

.objects {
  flex: 1;
  border-left: 40px solid #2d2d2d;
  padding-left: 20px;
}

.objects .i18 {
  margin: 0 5px 0 3px;
}

.objects .leaf {
  padding-left: 12px;
}

.files {
  padding: 5px 0 0 5px;
}

.files .i17 {
  margin: 0 3px 0 6px;
}

.files .l1 { padding-left: 17px; }
.files .l2 { padding-left: 35px; }
.files .l3 { padding-left: 52px; }
.files .l2.leaf { padding-left: 47px; }
.files .l3.leaf { padding-left: 64px; }

/* inspector */

.inspector {
  position: relative;
}

.asset-head {
  display: flex;
  height: 67px;
  padding: 8px 3px 0 14px;
  background: #3c3c3c;
  border-bottom: 1px solid #1f1f1f;
}

.asset-head .i28 {
  margin-top: 6px;
}

.asset-title {
  margin-left: 16px;
  line-height: 22px;
}

.asset-tools {
  display: flex;
  align-items: center;
  gap: 6px;
  height: 16px;
  margin-left: auto;
}

.transitions {
  height: 97px;
  padding: 3px 5px;
  border-bottom: 1px solid #1f1f1f;
}

.box {
  width: 100%;
  background: #414141;
  border: 1px solid #242424;
  border-radius: 4px;
}

table.box {
  border-spacing: 0;
  padding-bottom: 4px;
}

th,
.box-head {
  height: 24px;
  padding: 2px 0 0;
  background: #353535;
  border-bottom: 1px solid #242424;
  font-weight: 400;
  text-align: left;
}

th {
  width: 40px;
}

th.mute {
  width: 44px;
}

td {
  height: 35px;
  padding: 0;
  border-top: 5px solid #414141;
  background: #4d4d4d;
}

td input[type="checkbox"] {
  margin-left: -4px;
}

th.name,
td.name {
  width: auto;
  padding-left: 10px;
}

.box-foot {
  display: flex;
  justify-content: center;
  width: 41px;
  height: 25px;
  margin: -1px 13px 0 auto;
  background: #414141;
  border: 1px solid #242424;
  border-top: 0;
  border-radius: 0 0 4px 4px;
}

.box-foot.pair {
  justify-content: space-around;
  width: 72px;
}

.minus {
  display: block;
  width: 10px;
  height: 2px;
  background: #c4c4c4;
}

.transition-head {
  display: grid;
  grid-template-columns: 26px 1fr 14px;
  column-gap: 15px;
  height: 82px;
  padding: 7px 6px 0 14px;
  background: #3c3c3c;
  border-bottom: 1px solid #1f1f1f;
}

.transition-head .i28 {
  margin-top: 8px;
}

.transition-head .field {
  height: 20px;
  margin-right: -7px;
}

.transition-head button {
  height: 20px;
}

.transition-name {
  grid-column: 2;
  padding-left: 6px;
}

.settings {
  padding: 2px 4px 1px 5px;
}

.row {
  display: grid;
  grid-template-columns: 151px minmax(0, 1fr);
  align-items: center;
  height: 25px;
}

.row label {
  overflow: hidden;
  margin-right: 3px;
  white-space: nowrap;
}

.row .field {
  grid-column: 2;
  width: 100%;
}

.sub label {
  padding-left: 19px;
}

.row.group {
  display: flex;
  gap: 3px;
  margin-left: -4px;
}

.off {
  color: #7c7c7c;
}

.off .field {
  background: #323232;
  border-color: #282828;
  color: #808080;
}

.blend {
  display: block;
  margin: 0 4px;
}

.conditions {
  padding: 15px 5px 0;
}

.conditions .box {
  height: 93px;
}

.box-head {
  padding-top: 3px;
  padding-left: 9px;
}

.condition {
  display: flex;
  align-items: center;
  height: 29px;
  margin-top: 5px;
  padding: 0 8px 0 6px;
}

.condition + .condition {
  margin-top: 0;
}

.condition .dropdown {
  flex: none;
  width: 145px;
  margin-left: 9px;
}

.condition .handle + .dropdown {
  margin-left: 7px;
}

.condition .tight {
  width: 68px;
}

.condition .field {
  flex: 1;
  margin-left: 9px;
}

.tooltip {
  position: absolute;
  top: 361px;
  right: 2px;
  padding: 5px 7px 5px 9px;
  background: #3f3f3f;
  border: 1px solid #141414;
  white-space: nowrap;
}

.watermark {
  position: absolute;
  right: 16px;
  bottom: 8px;
  color: #cfcfcf;
  font-family: Roboto, sans-serif;
  text-shadow: 1px 1px 1px #222;
}
```
